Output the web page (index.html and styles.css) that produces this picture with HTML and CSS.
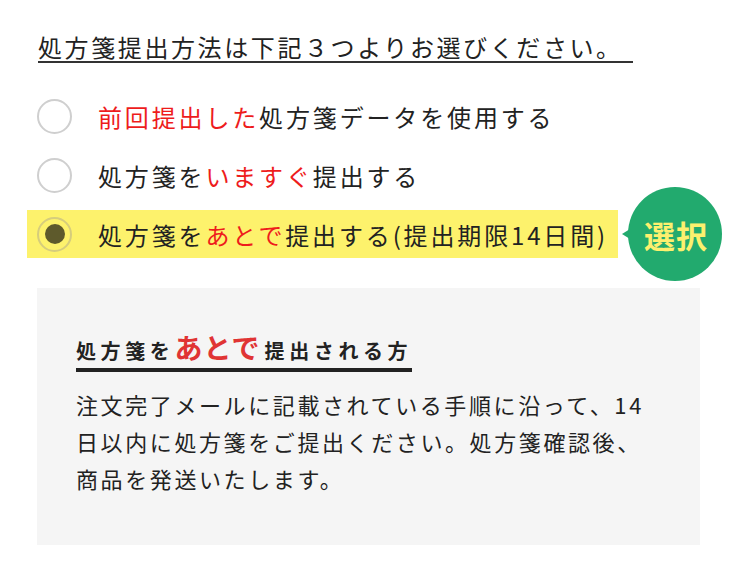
FILE: index.html
```html
<!DOCTYPE html>
<html lang="ja">
<head>
<meta charset="utf-8">
<link rel="stylesheet" href="styles.css">
</head>
<body>
<main class="page">
  <h1 class="title"><span class="title-text">処方箋提出方法は下記３つよりお選びください。</span></h1>
  <ul class="options">
    <li class="option">
      <span class="radio"></span>
      <span class="label"><span class="red">前回提出した</span>処方箋データを使用する</span>
    </li>
    <li class="option">
      <span class="radio"></span>
      <span class="label">処方箋を<span class="red">いますぐ</span>提出する</span>
    </li>
    <li class="option selected">
      <span class="radio checked"></span>
      <span class="label">処方箋を<span class="red">あとで</span>提出する(提出期限14日間)</span>
      <span class="badge"><span class="badge-text">選択</span></span>
    </li>
  </ul>
  <section class="note">
    <h2 class="note-title"><span class="small">処方箋を</span><span class="big">あとで</span><span class="small">提出される方</span></h2>
    <p class="note-body">注文完了メールに記載されている手順に沿って、14日以内に処方箋をご提出ください。処方箋確認後、商品を発送いたします。</p>
  </section>
</main>
</body>
</html>
```
FILE: styles.css
```css
* { box-sizing: border-box; }
html, body { margin: 0; padding: 0; background: #fff; }
body {
  font-family: "Noto Sans CJK JP", "Noto Sans", sans-serif;
  color: #222;
}
.page {
  padding: 33px 36px 0 27px;
}
.title {
  margin: 0 0 0 11px;
  font-size: 24px;
  font-weight: 400;
  line-height: 28px;
}
.title-text {
  display: inline-block;
  letter-spacing: 2.6px;
  padding-right: 10px;
  padding-bottom: 0;
  border-bottom: 2px solid #333;
}
.options {
  list-style: none;
  margin: 29px 0 0 0;
  padding: 0;
  display: flex;
  flex-direction: column;
  gap: 11px;
}
.option {
  position: relative;
  display: flex;
  align-items: center;
  gap: 26px;
  height: 48px;
  padding-left: 10px;
  padding-right: 10px;
  font-size: 24px;
  letter-spacing: 2.85px;
  width: fit-content;
}
.option.selected {
  background: #fdf26c;
}
.radio {
  width: 35px;
  height: 35px;
  border-radius: 50%;
  border: 2px solid #cfcfcf;
  background: #fff;
  flex: none;
  display: flex;
  align-items: center;
  justify-content: center;
}
.radio.checked {
  border-color: #d6cd7c;
  background: transparent;
}
.radio.checked::after {
  content: "";
  width: 20px;
  height: 20px;
  border-radius: 50%;
  background: #5e5a2c;
}
.red { color: #ee1c1c; }
.badge {
  position: absolute;
  left: calc(100% + 10px);
  top: 50%;
  transform: translateY(-50%);
  width: 94px;
  height: 94px;
  display: flex;
  align-items: center;
  justify-content: center;
}
.badge::before {
  content: "";
  position: absolute;
  left: -6px;
  top: 50%;
  margin-top: -10px;
  border-style: solid;
  border-width: 10px 16px 10px 0;
  border-color: transparent #22aa6e transparent transparent;
}
.badge::after {
  content: "";
  position: absolute;
  inset: 0;
  border-radius: 50%;
  background: #22aa6e;
}
.badge-text {
  position: relative;
  z-index: 1;
  color: #fdf06e;
  font-weight: 700;
  font-size: 31px;
  letter-spacing: 1px;
  margin-left: 2px;
}
.note {
  margin: 30px 0 0 10px;
  width: 663px;
  height: 257px;
  background: #f5f5f5;
  padding: 42px 39px 0 39px;
}
.note-title {
  display: inline-block;
  margin: 0;
  font-weight: 700;
  line-height: 34px;
  border-bottom: 4px solid #222;
  padding-bottom: 0;
}
.note-title .small {
  font-size: 20px;
  letter-spacing: 4.6px;
}
.note-title .big {
  font-size: 28px;
  color: #e03434;
  letter-spacing: 1px;
  margin-right: 4px;
}
.note-body {
  margin: 14px 0 0 0;
  font-size: 22px;
  letter-spacing: 2.6px;
  line-height: 37px;
}
```
